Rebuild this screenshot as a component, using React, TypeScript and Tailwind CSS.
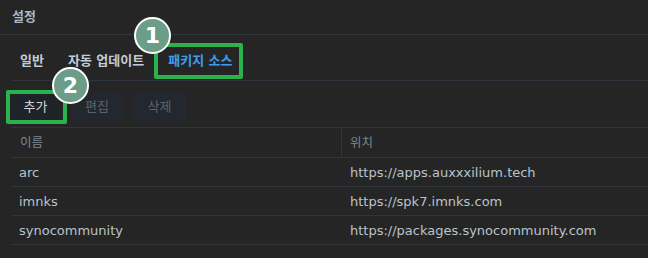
const rows = [
  { name: "arc", url: "https://apps.auxxxilium.tech" },
  { name: "imnks", url: "https://spk7.imnks.com" },
  { name: "synocommunity", url: "https://packages.synocommunity.com" },
];

const Badge = ({ n, className }: { n: string; className: string }) => (
  <div
    className={`absolute w-[37px] h-[37px] rounded-full bg-[#6b9d88] border-[2px] border-white flex items-center justify-center text-white text-[22px] font-bold leading-none ${className}`}
  >
    {n}
  </div>
);

const App = () => {
  return (
    <div
      className="relative w-[648px] h-[258px] bg-[#252525] overflow-hidden text-[#b9c3cc]"
      style={{ fontFamily: '"DejaVu Sans", "Noto Sans CJK KR", sans-serif' }}
    >
      <div className="h-[35px] flex items-center px-[12px] border-b border-[#2f353c] text-[13px] font-semibold text-[#aeb8c2]">
        설정
      </div>

      <div className="ml-[11px] h-[46px] flex items-center pt-[6px] pl-[9px] gap-[24px] border-b border-[#2f353c] text-[13px] font-bold">
        <span className="text-[#c3ccd4]">일반</span>
        <span className="text-[#c3ccd4]">자동 업데이트</span>
        <span className="text-[#3c9ef2]">패키지 소스</span>
      </div>

      <div className="ml-[11px] h-[47px] flex items-start pt-[12px] gap-[10px] border-b border-[#2f353c] text-[13px]">
        <button className="w-[51px] h-[28px] rounded-[3px] bg-[#1f2328] text-[#cdd5dc] -ml-[1px]">추가</button>
        <button className="w-[52px] h-[28px] rounded-[3px] bg-[#23282e] text-[#5b636c]">편집</button>
        <button className="w-[53px] h-[28px] rounded-[3px] bg-[#23282e] text-[#5b636c]">삭제</button>
      </div>

      <div className="ml-[11px]">
        <div className="flex h-[30px] border-b border-[#2f353c] text-[12.5px] text-[#7d8893]">
          <div className="w-[330px] flex items-center pl-[9px] pt-[2px]">이름</div>
          <div className="flex-1 flex items-center pl-[8px] pt-[2px] border-l border-[#2f353c]">위치</div>
        </div>
        {rows.map((r) => (
          <div key={r.name} className="flex h-[29px] border-b border-[#2f353c] text-[13px]">
            <div className="w-[330px] flex items-center pl-[8px] pt-[1px]">{r.name}</div>
            <div className="flex-1 flex items-center pl-[9px] pt-[1px]">{r.url}</div>
          </div>
        ))}
      </div>

      <div className="absolute left-[154px] top-[43px] w-[89px] h-[36px] border-[4px] border-[#2bb24c] rounded-[2px]" />
      <div className="absolute left-[6px] top-[90px] w-[61px] h-[34px] border-[4px] border-[#2bb24c] rounded-[2px]" />
      <Badge n="1" className="left-[134px] top-[17px]" />
      <Badge n="2" className="left-[52px] top-[67px]" />
    </div>
  );
};

export default App;
